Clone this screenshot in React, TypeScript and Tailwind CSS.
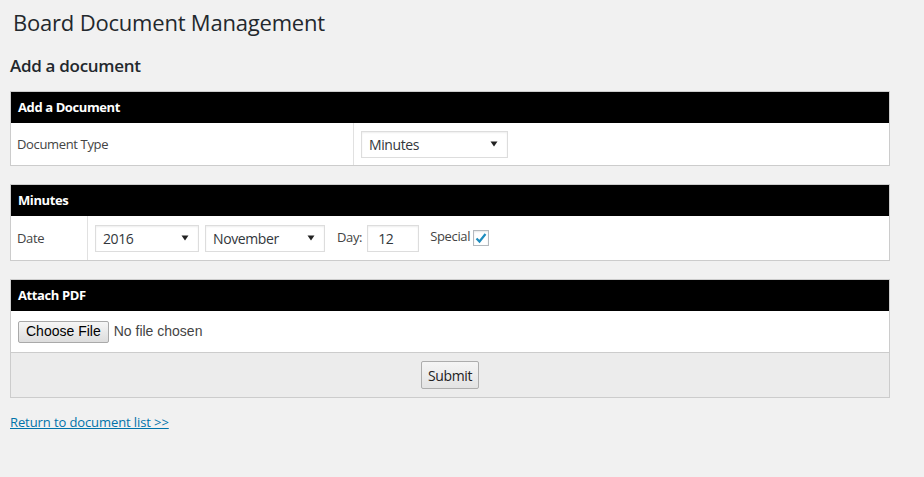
import React from "react";

const Caret = () => (
  <svg width="8" height="6" viewBox="0 0 8 6" className="absolute right-[9px] top-1/2 -translate-y-1/2">
    <path d="M0.5 0.5 H7.5 L4 5.5 Z" fill="#222" />
  </svg>
);

function Select({ value, width }: { value: string; width: string }) {
  return (
    <div className={`relative h-[27px] ${width} border border-[#ddd] bg-white shadow-[inset_0_1px_2px_rgba(0,0,0,0.07)] flex items-center pl-[7px] text-[14px] tracking-[-0.4px] text-[#32373c]`}>
      {value}
      <Caret />
    </div>
  );
}

function Header({ title }: { title: string }) {
  return (
    <div className="h-[31px] bg-black text-white font-bold text-[13px] tracking-[-0.4px] flex items-center px-[7px]">{title}</div>
  );
}

export default function App() {
  return (
    <div className="min-h-[477px] w-[924px] bg-[#f1f1f1] text-[#444] font-['Segoe_UI','Open_Sans',sans-serif] text-[13px] tracking-[-0.35px]">
      <div className="pl-[10px] pr-[34px]">
        <h1 className="text-[22px] tracking-[-0.2px] text-[#23282d] pt-[8px] pl-[3px] leading-[29px] font-normal">Board Document Management</h1>
        <h2 className="text-[17px] tracking-[-0.3px] font-semibold text-[#23282d] mt-[17px] leading-[24px]">Add a document</h2>

        <div className="mt-[13px] border border-[#ccc] bg-white">
          <Header title="Add a Document" />
          <div className="flex h-[42px]">
            <div className="w-[343px] border-r border-[#e1e1e1] flex items-center px-[6px] pt-[2px]">Document Type</div>
            <div className="flex items-center pl-[7px]">
              <Select value="Minutes" width="w-[147px]" />
            </div>
          </div>
        </div>

        <div className="mt-[18px] border border-[#ccc] bg-white">
          <Header title="Minutes" />
          <div className="flex h-[44px]">
            <div className="w-[77px] border-r border-[#e1e1e1] flex items-center px-[6px] pt-[1px]">Date</div>
            <div className="flex items-center pl-[7px]">
              <Select value="2016" width="w-[104px]" />
              <div className="ml-[6px]"><Select value="November" width="w-[120px]" /></div>
              <span className="ml-[12px]">Day:</span>
              <div className="ml-[5px] h-[27px] w-[52px] border border-[#ddd] bg-white flex items-center pl-[10px] text-[14px] text-[#32373c] shadow-[inset_0_1px_2px_rgba(0,0,0,0.07)]">12</div>
              <span className="ml-[11px] -mt-[2px]">Special</span>
              <div className="ml-[3px] h-[16px] w-[16px] border border-[#b4b9be] bg-white flex items-center justify-center shadow-[inset_0_1px_2px_rgba(0,0,0,0.1)]">
                <svg width="14" height="14" viewBox="0 0 14 14">
                  <path d="M2.5 7.5 L5.5 10.5 L11.5 3" stroke="#1e8cbe" strokeWidth="2.2" fill="none" />
                </svg>
              </div>
            </div>
          </div>
        </div>

        <div className="mt-[18px] border border-[#ccc] bg-white">
          <Header title="Attach PDF" />
          <div className="flex items-center h-[42px] px-[7px] border-b border-[#ccc]">
            <div className="h-[22px] px-[7px] border border-[#a9a9a9] rounded-[2px] bg-gradient-to-b from-[#f6f6f6] to-[#dddddd] flex items-center text-[14px] tracking-normal text-black font-['Liberation_Sans',Arial,sans-serif]">Choose File</div>
            <span className="ml-[5px] text-[14px] tracking-normal text-[#444] font-['Liberation_Sans',Arial,sans-serif]">No file chosen</span>
          </div>
          <div className="h-[44px] bg-[#ececec] flex items-center justify-center">
            <div className="h-[28px] px-[6px] border border-[#adadad] rounded-[2px] bg-gradient-to-b from-[#f5f5f5] to-[#e3e3e3] flex items-center text-[14px] text-[#222]">Submit</div>
          </div>
        </div>

        <a href="#" className="inline-block mt-[15px] text-[13px] tracking-[-0.1px] text-[#0073aa] underline">Return to document list &gt;&gt;</a>
      </div>
    </div>
  );
}
